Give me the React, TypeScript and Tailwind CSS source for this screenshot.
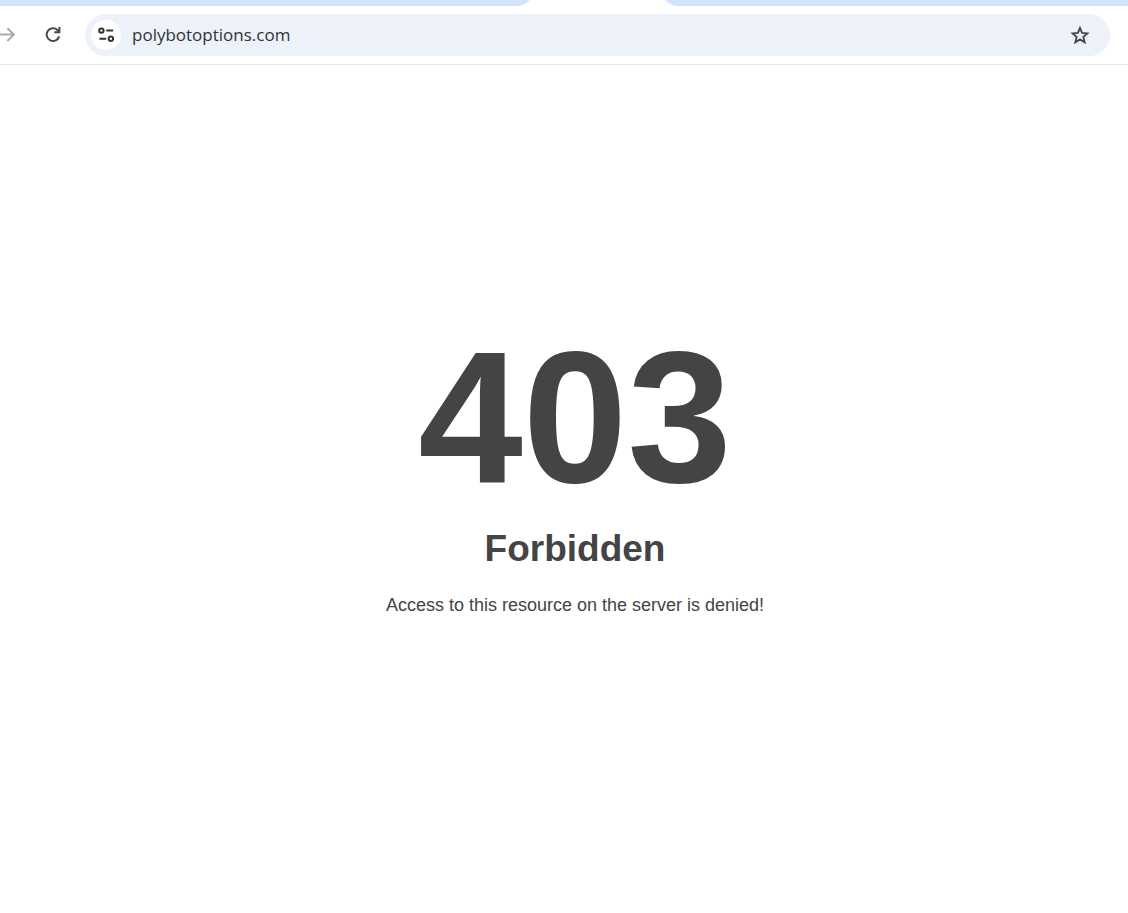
function ForwardIcon() {
  return (
    <svg width="16" height="16" viewBox="0 0 16 16" fill="none" stroke="#a9a9a9" strokeWidth="2" aria-hidden="true">
      <path d="M0 7.6H13M7.4 1.2L13.8 7.6L7.4 14" />
    </svg>
  );
}

function ReloadIcon() {
  return (
    <svg width="16" height="16" viewBox="0 0 16 16" fill="none" stroke="#474747" strokeWidth="2" aria-hidden="true">
      <path d="M14.2 9.4A6.4 6.4 0 1 1 12.4 2.9L14.2 5" />
      <path d="M14.4 0V5.2H9.2" />
    </svg>
  );
}

function SiteInfoIcon() {
  return (
    <svg width="16" height="16" viewBox="0 0 16 16" fill="none" stroke="#333333" strokeWidth="2" aria-hidden="true">
      <circle cx="3.4" cy="3.6" r="2.2" />
      <path d="M8.2 3.6H15.2M1.4 11.8H8.2" />
      <circle cx="12.9" cy="11.8" r="2.2" />
    </svg>
  );
}

function StarIcon() {
  return (
    <svg width="20" height="20" viewBox="0 0 20 20" fill="none" stroke="#474747" strokeWidth="1.9" aria-hidden="true">
      <path d="M10 3L12.1 7.9L17.4 8.4L13.4 11.9L14.6 17.2L10 14.4L5.4 17.2L6.6 11.9L2.6 8.4L7.9 7.9Z" />
    </svg>
  );
}

function TabStrip() {
  return (
    <div className="flex h-[6px] items-end overflow-hidden">
      <div className="h-5 w-[533px] shrink-0 rounded-br-2xl bg-[#d3e3fd]" />
      <div className="w-[129px] shrink-0" />
      <div className="h-5 flex-1 rounded-bl-2xl bg-[#d3e3fd]" />
    </div>
  );
}

function Toolbar() {
  return (
    <div className="flex items-center border-b border-[#e6e6e6] py-2 pr-[18px]">
      <button type="button" aria-label="Forward" disabled className="shrink-0">
        <ForwardIcon />
      </button>
      <button type="button" aria-label="Reload" className="ml-[29px] shrink-0">
        <ReloadIcon />
      </button>
      <div className="ml-6 flex h-[42px] flex-1 items-center rounded-full bg-[#ecf1fa] pr-5 pl-[6px]">
        <button
          type="button"
          aria-label="View site information"
          className="flex size-[30px] shrink-0 items-center justify-center rounded-full bg-white"
        >
          <SiteInfoIcon />
        </button>
        <input
          type="text"
          aria-label="Address"
          defaultValue="polybotoptions.com"
          className="ml-[11px] min-w-0 flex-1 bg-transparent font-['Open_Sans',sans-serif] text-[17px] leading-6 text-[#333333] outline-none"
        />
        <button type="button" aria-label="Bookmark this page" className="shrink-0">
          <StarIcon />
        </button>
      </div>
    </div>
  );
}

export default function App() {
  return (
    <div className="min-h-screen bg-white">
      <TabStrip />
      <Toolbar />
      <main className="pt-[258px] pl-[22px] text-center font-['Liberation_Sans',Arial,sans-serif] text-[#444444]">
        <h1 className="text-[188px] leading-[188px] font-bold">403</h1>
        <h2 className="mt-4 text-[37px] leading-[44px] font-bold">Forbidden</h2>
        <p className="mt-6 text-[18px] leading-5">Access to this resource on the server is denied!</p>
      </main>
    </div>
  );
}
